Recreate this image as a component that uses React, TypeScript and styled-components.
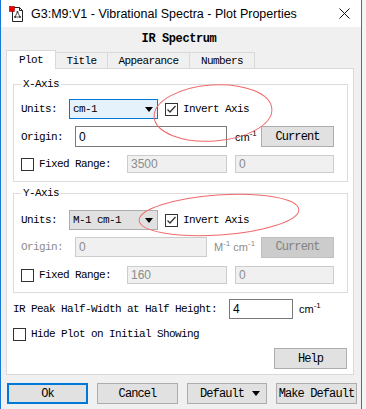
import React from "react";
import styled, { createGlobalStyle, css } from "styled-components";

const GlobalStyle = createGlobalStyle`
  html, body {
    margin: 0;
    padding: 0;
    background: #f4f4f4;
  }
`;

const mono = `"Liberation Mono", "DejaVu Sans Mono", monospace`;

const Window = styled.div`
  position: relative;
  width: 360px;
  height: 409px;
  border-left: 1px solid #1a78d6;
  border-right: 1px solid #1a78d6;
  background: #f0f0f0;
  font-family: ${mono};
  font-size: 11px;
  letter-spacing: -0.6px;
  color: #000;
  overflow: hidden;
`;

const TitleBar = styled.div`
  height: 27px;
  background: #fff;
  display: flex;
  align-items: center;
  padding-left: 8px;
  font-family: "Liberation Sans", Arial, sans-serif;
  font-size: 12.5px;
  letter-spacing: 0;
  color: #000;
`;

const TitleText = styled.span`
  margin-left: 7px;
  flex: 1;
`;

const CloseX = styled.div`
  width: 34px;
  display: flex;
  justify-content: center;
`;

const Heading = styled.div`
  height: 23px;
  display: flex;
  align-items: center;
  justify-content: center;
  font-weight: bold;
  font-size: 12px;
  letter-spacing: -0.4px;
  padding-right: 4px;
`;

const TabRow = styled.div`
  display: flex;
  align-items: flex-end;
  height: 18px;
  margin-left: 5px;
`;

const Tab = styled.div<{ $active?: boolean; $w: number }>`
  width: ${(p) => p.$w}px;
  height: ${(p) => (p.$active ? 18 : 16)}px;
  box-sizing: border-box;
  border: 1px solid #d9d9d9;
  border-bottom: none;
  margin-left: -1px;
  background: ${(p) => (p.$active ? "#fff" : "#f0f0f0")};
  display: flex;
  align-items: center;
  justify-content: center;
  position: relative;
  z-index: ${(p) => (p.$active ? 2 : 1)};
  ${(p) => p.$active && css`margin-bottom: -1px; height: 19px;`}
`;

const Panel = styled.div`
  margin-left: 5px;
  width: 348px;
  height: 307px;
  box-sizing: border-box;
  background: #fff;
  border: 1px solid #d9d9d9;
  padding: 4px 5px 0 6px;
  display: flex;
  flex-direction: column;
`;

const Group = styled.fieldset<{ $mt: number }>`
  margin: ${(p) => p.$mt}px 0 0 0;
  padding: 4px 0 8px 7px;
  border: 1px solid #dcdcdc;
  display: flex;
  flex-direction: column;
  min-width: 0;
`;

const Legend = styled.legend`
  padding: 0 2px;
  line-height: 14px;
`;

const Row = styled.div<{ $h: number; $mt?: number }>`
  display: flex;
  align-items: center;
  height: ${(p) => p.$h}px;
  margin-top: ${(p) => p.$mt ?? 0}px;
`;

const Label = styled.span<{ $w?: number; $disabled?: boolean }>`
  width: ${(p) => (p.$w ? `${p.$w}px` : "auto")};
  flex: none;
  color: ${(p) => (p.$disabled ? "#8c8c8c" : "#000")};
  white-space: nowrap;
`;

const Combo = styled.div<{ $focus?: boolean }>`
  width: 89px;
  height: 20px;
  box-sizing: border-box;
  border: 1px solid ${(p) => (p.$focus ? "#0078d7" : "#adadad")};
  background: ${(p) => (p.$focus ? "#e5f1fb" : "#e1e1e1")};
  display: flex;
  align-items: center;
  padding-left: 3px;
  position: relative;
  flex: none;
`;

const ComboText = styled.span`
  flex: 1;
`;

const Arrow = styled.span<{ $color?: string }>`
  width: 0;
  height: 0;
  border-left: 4px solid transparent;
  border-right: 4px solid transparent;
  border-top: 5px solid ${(p) => p.$color ?? "#000"};
  margin-right: 4px;
`;

const Input = styled.div<{ $w: number; $h?: number; $disabled?: boolean }>`
  width: ${(p) => p.$w}px;
  height: ${(p) => p.$h ?? 20}px;
  box-sizing: border-box;
  border: 1px solid ${(p) => (p.$disabled ? "#cccccc" : "#7a7a7a")};
  background: ${(p) => (p.$disabled ? "#f0f0f0" : "#fff")};
  color: ${(p) => (p.$disabled ? "#8c8c8c" : "#000")};
  font-family: "Liberation Sans", Arial, sans-serif;
  font-size: 12px;
  letter-spacing: 0;
  display: flex;
  align-items: center;
  padding-left: 3px;
  flex: none;
`;

const Box = styled.span<{ $checked?: boolean }>`
  width: 13px;
  height: 13px;
  box-sizing: border-box;
  border: 1px solid #333;
  background: #fff;
  display: inline-flex;
  align-items: center;
  justify-content: center;
  flex: none;
  margin-right: 5px;
`;

const Button = styled.div<{ $w: number; $h?: number; $disabled?: boolean; $focus?: boolean }>`
  width: ${(p) => p.$w}px;
  height: ${(p) => p.$h ?? 21}px;
  box-sizing: border-box;
  border: ${(p) => (p.$focus ? "2px solid #0078d7" : `1px solid ${p.$disabled ? "#bfbfbf" : "#adadad"}`)};
  background: ${(p) => (p.$disabled ? "#cccccc" : "#e1e1e1")};
  color: ${(p) => (p.$disabled ? "#838383" : "#000")};
  display: flex;
  align-items: center;
  justify-content: center;
  font-size: 12px;
  letter-spacing: -0.9px;
  flex: none;
`;

const Unit = styled.span<{ $disabled?: boolean; $w: number }>`
  width: ${(p) => p.$w}px;
  flex: none;
  font-family: "Liberation Sans", Arial, sans-serif;
  font-size: 11px;
  letter-spacing: 0;
  color: ${(p) => (p.$disabled ? "#8c8c8c" : "#000")};
  sup {
    font-size: 8px;
    vertical-align: 5px;
    line-height: 0;
  }
`;

const Footer = styled.div`
  display: flex;
  margin-top: 8px;
  margin-left: 6px;
  gap: 9px;
`;

const Ellipses = styled.svg`
  position: absolute;
  left: 0;
  top: 0;
  pointer-events: none;
`;

function Check({ checked }: { checked?: boolean }) {
  return (
    <Box $checked={checked}>
      {checked && (
        <svg width="11" height="11" viewBox="0 0 11 11">
          <path d="M1.5 5.5 L4 8 L9.5 2" fill="none" stroke="#333" strokeWidth="1.3" />
        </svg>
      )}
    </Box>
  );
}

function DocIcon() {
  return (
    <svg width="15" height="16" viewBox="0 0 15 16">
      <path d="M3.5 1.5 H10.5 L13.5 4.5 V15.5 H3.5 Z" fill="#fff" stroke="#222" />
      <path d="M10.5 1.5 V4.5 H13.5" fill="none" stroke="#222" />
      <path d="M8.5 6 L6 11 L11 11 Z" fill="none" stroke="#555" />
      <circle cx="8.5" cy="6" r="1" fill="#333" />
      <circle cx="6" cy="11" r="1" fill="#333" />
      <circle cx="11" cy="11" r="1" fill="#333" />
      <rect x="0.5" y="0.5" width="5" height="5" fill="#e00" stroke="#900" strokeWidth="0.6" />
    </svg>
  );
}

export default function App() {
  return (
    <>
      <GlobalStyle />
      <Window>
        <TitleBar>
          <DocIcon />
          <TitleText>G3:M9:V1 - Vibrational Spectra - Plot Properties</TitleText>
          <CloseX>
            <svg width="11" height="11" viewBox="0 0 11 11">
              <path d="M0.5 0.5 L10.5 10.5 M10.5 0.5 L0.5 10.5" stroke="#111" strokeWidth="1" />
            </svg>
          </CloseX>
        </TitleBar>
        <Heading>IR Spectrum</Heading>
        <TabRow>
          <Tab $active $w={50} style={{ marginLeft: 0 }}>Plot</Tab>
          <Tab $w={53}>Title</Tab>
          <Tab $w={83}>Appearance</Tab>
          <Tab $w={66}>Numbers</Tab>
        </TabRow>
        <Panel>
          <Group $mt={4}>
            <Legend>X-Axis</Legend>
            <Row $h={20} $mt={4}>
              <Label $w={48}>Units:</Label>
              <Combo $focus>
                <ComboText>cm-1</ComboText>
                <Arrow />
              </Combo>
              <span style={{ width: 7 }} />
              <Check checked />
              <Label>Invert Axis</Label>
            </Row>
            <Row $h={21} $mt={7}>
              <Label $w={54}>Origin:</Label>
              <Input $w={152} $h={21}>0</Input>
              <span style={{ width: 8 }} />
              <Unit $w={26}>
                cm<sup>-1</sup>
              </Unit>
              <Button $w={73}>Current</Button>
            </Row>
            <Row $h={18} $mt={8}>
              <Check />
              <Label $w={88}>Fixed Range:</Label>
              <Input $w={100} $h={18} $disabled>3500</Input>
              <span style={{ width: 8 }} />
              <Input $w={99} $h={18} $disabled>0</Input>
            </Row>
          </Group>
          <Group $mt={4}>
            <Legend>Y-Axis</Legend>
            <Row $h={20} $mt={6}>
              <Label $w={48}>Units:</Label>
              <Combo>
                <ComboText>M-1 cm-1</ComboText>
                <Arrow />
              </Combo>
              <span style={{ width: 7 }} />
              <Check checked />
              <Label>Invert Axis</Label>
            </Row>
            <Row $h={20} $mt={7}>
              <Label $w={54} $disabled>Origin:</Label>
              <Input $w={132} $disabled>0</Input>
              <span style={{ width: 7 }} />
              <Unit $disabled $w={47}>
                M<sup>-1</sup> cm<sup>-1</sup>
              </Unit>
              <Button $w={73} $disabled>Current</Button>
            </Row>
            <Row $h={18} $mt={9}>
              <Check />
              <Label $w={88}>Fixed Range:</Label>
              <Input $w={100} $h={18} $disabled>160</Input>
              <span style={{ width: 8 }} />
              <Input $w={99} $h={18} $disabled>0</Input>
            </Row>
          </Group>
          <Row $h={20} $mt={6}>
            <Label $w={216}>IR Peak Half-Width at Half Height:</Label>
            <Input $w={64}>4</Input>
            <span style={{ width: 6 }} />
            <Unit $w={30}>
              cm<sup>-1</sup>
            </Unit>
          </Row>
          <Row $h={14} $mt={8}>
            <Check />
            <Label>Hide Plot on Initial Showing</Label>
          </Row>
          <Row $h={21} $mt={7} style={{ justifyContent: "flex-end", paddingRight: 1 }}>
            <Button $w={73}>Help</Button>
          </Row>
        </Panel>
        <Footer>
          <Button $w={81} $focus>Ok</Button>
          <Button $w={81}>Cancel</Button>
          <Button $w={80} style={{ justifyContent: "space-between", padding: "0 6px 0 12px" }}>
            Default
            <Arrow style={{ marginRight: 0 }} />
          </Button>
          <Button $w={81}>Make Default</Button>
        </Footer>
        <Ellipses width="362" height="409">
          <ellipse cx="212" cy="113" rx="59" ry="28" fill="none" stroke="#f06a6a" strokeWidth="1" transform="rotate(-4 212 113)" />
          <ellipse cx="218" cy="215" rx="80" ry="20" fill="none" stroke="#f06a6a" strokeWidth="1" transform="rotate(-4 218 215)" />
        </Ellipses>
      </Window>
    </>
  );
}
